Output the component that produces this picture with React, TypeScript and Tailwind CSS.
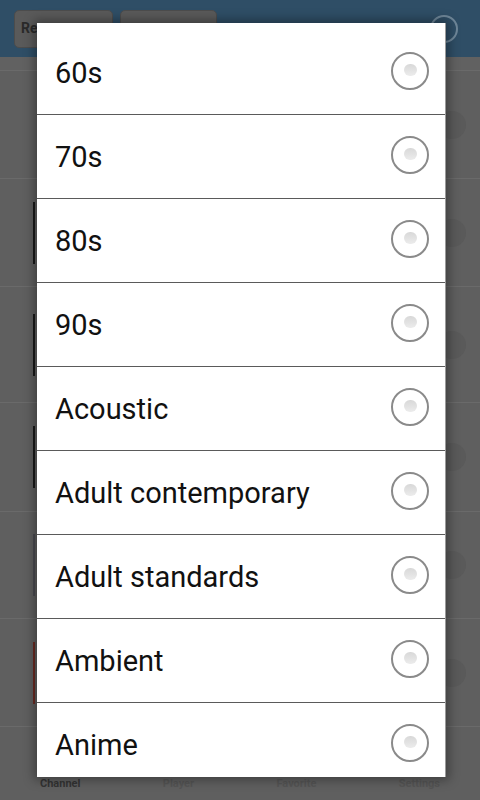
import React from "react";

const items = [
  "60s",
  "70s",
  "80s",
  "90s",
  "Acoustic",
  "Adult contemporary",
  "Adult standards",
  "Ambient",
  "Anime",
];

const bgRows: { h: string; thumb: string }[] = [
  { h: "h-[108px]", thumb: "border-transparent" },
  { h: "h-[108px]", thumb: "border-[#1a1a1a]" },
  { h: "h-[116px]", thumb: "border-[#1a1a1a]" },
  { h: "h-[109px]", thumb: "border-[#1a1a1a]" },
  { h: "h-[107px]", thumb: "border-[#4a4a50]" },
  { h: "h-[108px]", thumb: "border-[#6a2a22]" },
];

function Radio() {
  return (
    <div className="w-[38px] h-[38px] rounded-full border-2 border-[#8a8a8a] flex items-center justify-center shrink-0">
      <div className="w-[13px] h-[12px] rounded-full bg-gradient-to-b from-[#d8d8d8] to-[#ececec] -mt-[2px]" />
    </div>
  );
}

export default function App() {
  return (
    <div
      className="relative w-[480px] h-[800px] overflow-hidden bg-[#5f5f5f]"
      style={{ fontFamily: "Roboto, 'Noto Sans', sans-serif" }}
    >
      {/* dimmed background app */}
      <div className="flex flex-col h-full">
        <div className="h-[57px] bg-[#2f4e66] flex items-center px-[14px] gap-[7px] shrink-0">
          <div className="w-[99px] h-[38px] rounded-[5px] bg-[#5a5a5a] border border-[#4c4c4c] flex items-center px-[6px] text-[#2a2a2a] font-bold text-[14px]">
            Re
          </div>
          <div className="w-[97px] h-[38px] rounded-[5px] bg-[#5a5a5a] border border-[#4c4c4c]" />
          <div className="ml-auto mr-[8px] w-[28px] h-[28px] rounded-full border-2 border-[#6f8799]" />
        </div>
        <div className="h-[14px] bg-[#616161] border-b border-[#6a6a6a] shrink-0" />
        {bgRows.map((r, i) => (
          <div
            key={i}
            className={`${r.h} shrink-0 border-b border-[#6a6a6a] flex items-center`}
          >
            <div className={`ml-[33px] w-[70px] h-[62px] border-l-2 ${r.thumb}`} />
            <div className="ml-auto mr-[14px] w-[28px] h-[28px] rounded-full bg-[#5a5a5a]" />
          </div>
        ))}
        <div className="flex-1 flex items-end justify-between px-[40px] pb-[8px] text-[11px] font-bold">
          <span className="text-[#333]">Channel</span>
          <span className="text-[#545454]">Player</span>
          <span className="text-[#545454]">Favorite</span>
          <span className="text-[#545454]">Settings</span>
        </div>
      </div>

      {/* dialog */}
      <div className="absolute left-[37px] top-[23px] w-[409px] h-[754px] bg-white overflow-hidden border-r border-[#9a9a9a] shadow-[0_0_10px_3px_rgba(0,0,0,0.35)]">
        <div className="pt-[8px]">
          {items.map((t) => (
            <div
              key={t}
              className="h-[84px] border-b border-[#5a5a5a] flex items-center pl-[18px] pr-[16px]"
            >
              <span className="text-[29px] text-[#111] leading-none mt-[2px]">{t}</span>
              <div className="ml-auto -mt-[3px]">
                <Radio />
              </div>
            </div>
          ))}
        </div>
      </div>
    </div>
  );
}
